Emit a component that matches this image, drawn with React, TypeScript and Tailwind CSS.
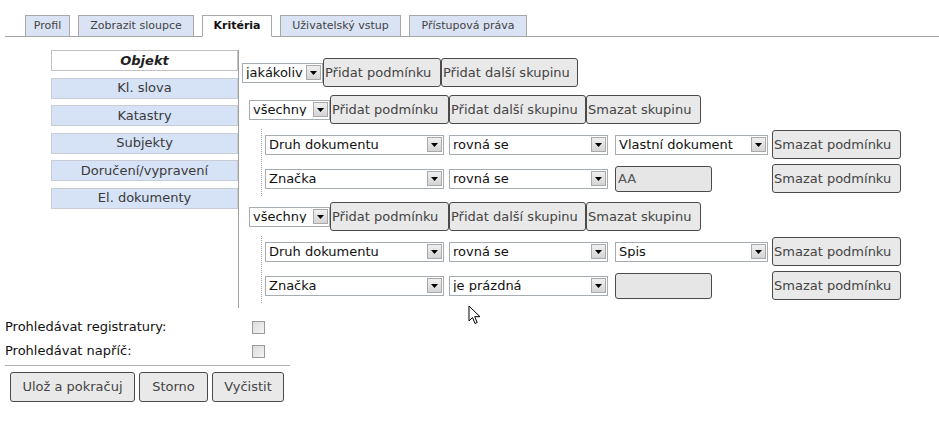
import React from "react";

// Search criteria editor: tabs, left section menu, nested condition groups.

const tabs: [string, string][] = [
  ["Profil", "w-[45px]"],
  ["Zobrazit sloupce", "w-[116px]"],
  ["Kritéria", "w-[70px]"],
  ["Uživatelský vstup", "w-[121px]"],
  ["Přístupová práva", "w-[118px]"],
];
const menu = ["Objekt", "Kl. slova", "Katastry", "Subjekty", "Doručení/vypravení", "El. dokumenty"];

type Cond = { field: string; op: string; value: { kind: "select" | "input"; text: string } };

const groups: Cond[][] = [
  [
    { field: "Druh dokumentu", op: "rovná se", value: { kind: "select", text: "Vlastní dokument" } },
    { field: "Značka", op: "rovná se", value: { kind: "input", text: "AA" } },
  ],
  [
    { field: "Druh dokumentu", op: "rovná se", value: { kind: "select", text: "Spis" } },
    { field: "Značka", op: "je prázdná", value: { kind: "input", text: "" } },
  ],
];

function Arrow() {
  return (
    <span className="flex h-[15px] w-[15px] shrink-0 items-center justify-center border border-[#a9a9a9] bg-gradient-to-b from-[#f0f0f0] to-[#d4d4d4]">
      <svg width="7" height="4" viewBox="0 0 7 4">
        <path d="M0 0h7L3.5 4z" fill="#000" />
      </svg>
    </span>
  );
}

function FakeSelect({ text, w }: { text: string; w: string }) {
  return (
    <div className={`flex h-[20px] ${w} shrink-0 items-center justify-between border border-[#a5acb2] bg-white pl-[3px] pr-[1px]`}>
      <span className="truncate leading-none">{text}</span>
      <Arrow />
    </div>
  );
}

function Btn({ children, w }: { children: React.ReactNode; w: string }) {
  return (
    <button
      type="button"
      className={`${w} h-[29px] shrink-0 rounded-[3px] border border-[#4a4a4a] bg-[#e9e9e9] pl-[1px] text-left font-normal leading-none text-[#444]`}
    >
      {children}
    </button>
  );
}

function GroupHeader() {
  return (
    <div className="flex items-center">
      <FakeSelect text="všechny" w="w-[81px]" />
      <Btn w="w-[119px]">Přidat podmínku</Btn>
      <Btn w="w-[137px]">Přidat další skupinu</Btn>
      <Btn w="w-[115px]">Smazat skupinu</Btn>
    </div>
  );
}

function CondRow({ c }: { c: Cond }) {
  return (
    <div className="flex items-center">
      <FakeSelect text={c.field} w="w-[179px]" />
      <div className="w-[5px]" />
      <FakeSelect text={c.op} w="w-[159px]" />
      <div className="w-[7px]" />
      <div className="flex w-[157px] shrink-0 items-center">
        {c.value.kind === "select" ? (
          <FakeSelect text={c.value.text} w="w-[153px]" />
        ) : (
          <div className="flex h-[26px] w-[97px] items-center rounded-[3px] border border-[#4a4a4a] bg-[#e6e6e6] pl-[2px] text-[#555]">
            {c.value.text}
          </div>
        )}
      </div>
      <Btn w="w-[129px]">Smazat podmínku</Btn>
    </div>
  );
}

export default function App() {
  return (
    <div
      className="relative h-[430px] w-[939px] overflow-hidden bg-white text-[13px] text-[#111]"
      style={{ fontFamily: '"DejaVu Sans", Verdana, sans-serif' }}
    >
      {/* tabs */}
      <div className="ml-[5px] flex gap-[8px] border-b border-[#a0a0a0] pl-[20px] pt-[15px]">
        {tabs.map(([t, w]) => {
          const active = t === "Kritéria";
          return (
            <div
              key={t}
              className={`-mb-px flex h-[22px] ${w} items-center justify-center border border-[#a8a8a8] text-[11px] ${
                active ? "border-b-white bg-white font-bold text-[#111]" : "bg-[#d9e3f4] text-[#444]"
              }`}
            >
              {t}
            </div>
          );
        })}
      </div>

      {/* body */}
      <div className="mt-[13px] flex">
        <div className="ml-[51px] flex w-[188px] shrink-0 flex-col gap-[6.5px] border-r border-[#a0a0a0]">
          {menu.map((m, i) => (
            <div
              key={m}
              className={`flex h-[21px] items-center justify-center border text-[13px] ${
                i === 0
                  ? "border-[#c2c2c2] bg-white font-bold italic text-[#222]"
                  : "border-[#c8ccd4] bg-[#d6e2f6] text-[#3a3a3a]"
              }`}
            >
              {m}
            </div>
          ))}
        </div>

        <div className="flex flex-col pb-[5px] pt-[8px]">
          <div className="ml-[3px] flex items-center">
            <FakeSelect text="jakákoliv" w="w-[81px]" />
            <Btn w="w-[118px]">Přidat podmínku</Btn>
            <Btn w="w-[137px]">Přidat další skupinu</Btn>
          </div>

          <div className="ml-[10px] flex flex-col">
            {groups.map((g, gi) => (
              <div key={gi} className={gi === 0 ? "mt-[8px]" : "mt-[6px]"}>
                <GroupHeader />
                <div className="ml-[12px] mt-[5px] flex flex-col gap-[5px] border-l border-dotted border-[#a0a0a0] pb-[3px] pl-[3px] pt-px">
                  {g.map((c, ci) => (
                    <CondRow key={ci} c={c} />
                  ))}
                </div>
              </div>
            ))}
          </div>
        </div>
      </div>

      {/* options */}
      <div className="mt-[7px] flex w-[290px] flex-col pl-[5px]">
        <div className="flex h-[24px] items-center justify-between pr-[25px]">
          <span>Prohledávat registratury:</span>
          <span className="h-[13px] w-[13px] border border-[#9a9a9a] bg-gradient-to-br from-[#dcdcdc] to-[#f4f4f4]" />
        </div>
        <div className="flex h-[24px] items-center justify-between pr-[25px]">
          <span>Prohledávat napříč:</span>
          <span className="h-[13px] w-[13px] border border-[#9a9a9a] bg-gradient-to-br from-[#dcdcdc] to-[#f4f4f4]" />
        </div>
        <div className="mt-[2px] border-t border-[#b0b0b0]" />
        <div className="mt-[6px] flex gap-[4px] pl-[5px]">
          {[
            ["Ulož a pokračuj", "w-[125px]"],
            ["Storno", "w-[69px]"],
            ["Vyčistit", "w-[72px]"],
          ].map(([t, w]) => (
            <button
              key={t}
              type="button"
              className={`${w} h-[30px] rounded-[3px] border border-[#4a4a4a] bg-[#e9e9e9] text-center font-normal text-[#444]`}
            >
              {t}
            </button>
          ))}
        </div>
      </div>

      {/* mouse pointer */}
      <svg className="absolute left-[468px] top-[305px]" width="13" height="20" viewBox="0 0 13 20">
        <path d="M1 1v15l3.5-3.5 2.5 6 2.2-1-2.5-5.8H12z" fill="#fff" stroke="#000" strokeWidth="1" strokeLinejoin="round" />
      </svg>
    </div>
  );
}
